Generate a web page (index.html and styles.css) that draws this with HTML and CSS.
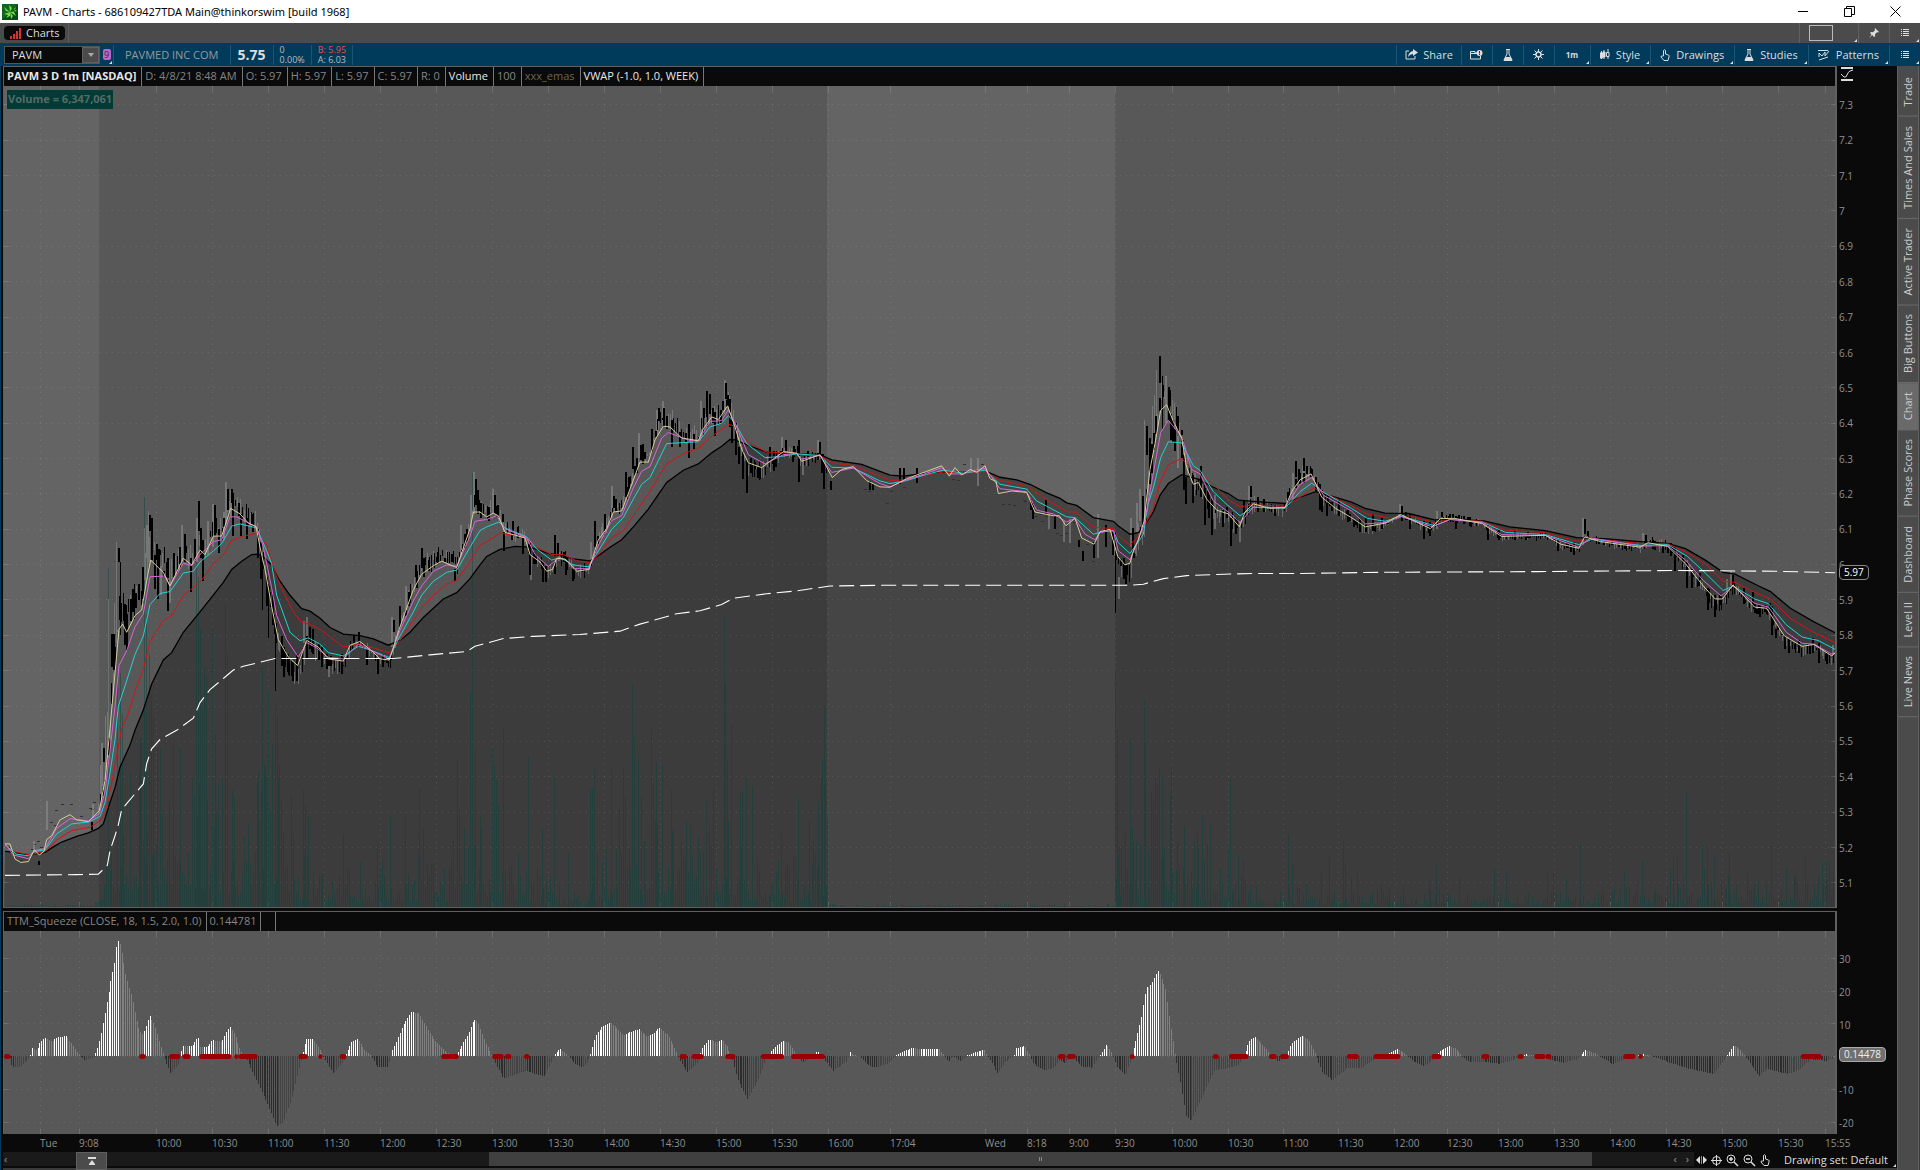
FILE: index.html
```html
<!DOCTYPE html>
<html lang="en">
<head>
    <meta charset="UTF-8">
    <meta name="viewport" content="width=device-width, initial-scale=1.0">
    <title>PAVM - Charts</title>
    <link rel="stylesheet" href="styles.css">
</head>
<body>
    <header class="titlebar">
        <svg class="app-icon" width="16" height="16" viewBox="0 0 16 16">
            <rect width="16" height="16" fill="#14641f"/>
            <path d="M0 16L16 0v16z" fill="#0a4a16"/>
            <path d="M8 8L2 3l2 4zM8 8L7 1l3 3zM8 8l6-5-2 5zM8 8l-6 2 4 1zM8 8l-4 6 4-2zM8 8l1 7 2-3zM8 8l6 4-2-4zM8 8l7-1-3-2z" fill="#6fdc4a"/>
        </svg>
        <h1>PAVM - Charts - 686109427TDA Main@thinkorswim [build 1968]</h1>
        <div class="window-buttons">
            <button aria-label="Minimize"><svg width="11" height="11" viewBox="0 0 11 11"><path d="M0 5.5h10"/></svg></button>
            <button aria-label="Restore"><svg width="11" height="11" viewBox="0 0 11 11"><path d="M.5 2.5h7v8h-7zM2.5 2.5v-2h8v8h-3"/></svg></button>
            <button aria-label="Close"><svg width="11" height="11" viewBox="0 0 11 11"><path d="M.5 .5l10 10M10.5 .5l-10 10"/></svg></button>
        </div>
    </header>

    <nav class="tabbar">
        <div class="tab-cell">
            <a href="#charts" class="tab">
                <svg width="11" height="11" viewBox="0 0 11 11"><path d="M1 11V8M4 11V6M7 11V3M10 11V0" stroke="#d8322c" stroke-width="2"/></svg>
                Charts
            </a>
        </div>
        <div class="tabbar-right">
            <button class="frame-cell corner" aria-label="Layout"><span class="frame"></span></button>
            <button class="small-cell" aria-label="Pin"><svg width="10" height="10" viewBox="0 0 10 10"><path d="M6 0l4 4-1 .5-1-.2-2 2 .2 2L5 9 3.2 7 0 10l2.500-3.500L1 5l1-1 2 .2 2-2-.3-1z" fill="#ddd"/></svg></button>
            <button class="small-cell corner" aria-label="Menu"><svg width="8" height="8" viewBox="0 0 8 8"><path d="M0 .5h1M2 .5h6M0 2.5h1M2 2.5h6M0 4.5h1M2 4.5h6M0 6.5h1M2 6.5h6" stroke="#ddd"/></svg></button>
        </div>
    </nav>

    <div class="toolbar">
        <div class="symbol-box">
            <input type="text" id="symbol" value="PAVM" aria-label="Symbol">
            <button aria-label="Symbol list"><svg width="6" height="4" viewBox="0 0 6 4"><path d="M0 0h6L3 4z" fill="#aaa"/></svg></button>
        </div>
        <button class="link-cell corner" aria-label="Link group"><span class="link-badge">9</span></button>
        <span class="company">PAVMED INC COM</span>
        <strong class="last-price">5.75</strong>
        <span class="two-line"><span>0</span><span>0.00%</span></span>
        <span class="two-line"><span class="bid">B: 5.95</span><span>A: 6.03</span></span>
        <div class="tools">
            <button class="tool"><svg width="13" height="11" viewBox="0 0 13 11"><path d="M4 2H1v8h9V7" fill="none" stroke="#ddd"/><path d="M8 0l5 3.5L8 7V5Q5 5 3 8 3.5 3 8 2z" fill="#ddd"/></svg>Share</button>
            <button class="tool icon-only" aria-label="Snapshot"><svg width="13" height="10" viewBox="0 0 13 10"><path d="M.5 3V1.5H5V3h2M.5 3v6h10V6M.5 3.5H7" fill="none" stroke="#ddd"/><circle cx="9.5" cy="3" r="3" fill="#ddd"/><path d="M9.5 1v2.500M9.5 4v1" stroke="#003b5c"/></svg></button>
            <button class="tool icon-only" aria-label="Lab"><svg width="10" height="12" viewBox="0 0 10 12"><path d="M3 .5h4M4 1v4L1 11h8L6 5V1" fill="none" stroke="#ddd"/><path d="M2.5 8h5l2 4h-9z" fill="#ddd"/></svg></button>
            <button class="tool icon-only" aria-label="Settings"><svg width="11" height="11" viewBox="0 0 11 11"><circle cx="5.5" cy="5.5" r="2.5" fill="none" stroke="#ddd" stroke-width="1.5"/><path d="M5.5 0v3M5.5 8v3M0 5.5h3M8 5.5h3M1.5 1.5l2 2M7.5 7.5l2 2M9.5 1.5l-2 2M3.5 7.5l-2 2" stroke="#ddd"/></svg></button>
            <button class="tool period corner">1m</button>
            <button class="tool corner"><svg width="10" height="11" viewBox="0 0 10 11"><path d="M0 4h2.500v5H0zM3 3h2v5H3zM1.5 2v8M4 1v9" fill="#ddd" stroke="#ddd"/><path d="M6.5 3.5h2.500v4H6.5zM8 0v3M8 8v2" fill="none" stroke="#ddd"/></svg>Style</button>
            <button class="tool corner"><svg width="10" height="12" viewBox="0 0 10 12"><path d="M3.5 7V1.5q1-1.500 2 0V5l3 1q1 .5.5 2L8 11.5H4L1 8q0-1.500 1.500-1z" fill="none" stroke="#ddd"/></svg>Drawings</button>
            <button class="tool corner"><svg width="10" height="12" viewBox="0 0 10 12"><path d="M3 .5h4M4 1v4L1 11h8L6 5V1" fill="none" stroke="#ddd"/><path d="M2.5 8h5l2 4h-9z" fill="#ddd"/></svg>Studies</button>
            <button class="tool corner"><svg width="12" height="12" viewBox="0 0 12 12"><path d="M0 1.5h10M1 8V4l3 3 3-4v4l4-5M1 11l9-3" fill="none" stroke="#ddd"/></svg>Patterns</button>
            <button class="tool icon-only corner" aria-label="Chart menu"><svg width="8" height="8" viewBox="0 0 8 8"><path d="M0 .5h1M2 .5h6M0 2.5h1M2 2.5h6M0 4.5h1M2 4.5h6M0 6.5h1M2 6.5h6" stroke="#ddd"/></svg></button>
        </div>
    </div>

    <main>
        <section class="workspace">
            <div class="panel price-panel">
                <div class="plot-column">
                    <div class="study-row">
                        <span class="bright bold">PAVM 3 D 1m [NASDAQ]</span>
                        <span>D: 4/8/21 8:48 AM</span>
                        <span>O: 5.97</span>
                        <span>H: 5.97</span>
                        <span>L: 5.97</span>
                        <span>C: 5.97</span>
                        <span>R: 0</span>
                        <span class="bright">Volume</span>
                        <span>100</span>
                        <span class="olive">xxx_emas</span>
                        <span class="bright">VWAP (-1.0, 1.0, WEEK)</span>
                    </div>
                    <div class="plot">
                        <svg id="priceChart" viewBox="4 86 1831 821" preserveAspectRatio="none"></svg>
                        <span class="volume-tag">Volume = 6,347,061</span>
                    </div>
                </div>
                <div class="axis price-axis" id="priceAxis">
                    <button class="scale-button" aria-label="Scale"><svg width="12" height="14" viewBox="0 0 12 14"><path d="M0 1h12M0 13h12" stroke="#ddd" stroke-width="2"/><path d="M0 7l3 3q2 1 3-2t3-4l3-1" fill="none" stroke="#ddd"/></svg></button>
                    <span class="price-badge">5.97</span>
                </div>
            </div>

            <div class="panel squeeze-panel">
                <div class="plot-column">
                    <div class="study-row">
                        <span>TTM_Squeeze (CLOSE, 18, 1.5, 2.0, 1.0)</span>
                        <span>0.144781</span>
                        <span class="empty-cell"></span>
                    </div>
                    <div class="plot">
                        <svg id="squeezeChart" viewBox="4 931 1831 203" preserveAspectRatio="none"></svg>
                    </div>
                </div>
                <div class="axis squeeze-axis" id="squeezeAxis">
                    <span class="squeeze-badge">0.14478</span>
                </div>
            </div>

            <div class="time-axis" id="timeAxis"></div>

            <div class="bottom-row">
                <div class="scroll-track">
                    <span class="arrow">‹</span>
                    <button class="jump" aria-label="Collapse"><svg width="8" height="8" viewBox="0 0 8 8"><path d="M0 1h8" stroke="#ddd" stroke-width="2"/><path d="M4 3l3 4H1zM1 7h6v1H1z" fill="#ddd"/></svg></button>
                    <div class="scroll-gap"></div>
                    <div class="thumb"><span></span><span></span></div>
                    <div class="scroll-end"><span>‹</span><span>›</span></div>
                </div>
                <div class="zoom-tools">
                    <button aria-label="Expand"><svg width="11" height="8" viewBox="0 0 11 8"><path d="M4 0v8L0 4zM7 0v8l4-4z" fill="#ddd"/><path d="M5.5 0v8" stroke="#888"/></svg></button>
                    <button aria-label="Crosshair"><svg width="11" height="11" viewBox="0 0 11 11"><circle cx="5.5" cy="5.5" r="4" fill="none" stroke="#ddd"/><path d="M5.5 0v11M0 5.5h11" stroke="#ddd"/></svg></button>
                    <button aria-label="Zoom in"><svg width="13" height="13" viewBox="0 0 13 13"><circle cx="5" cy="5" r="4" fill="none" stroke="#ddd"/><path d="M8 8l4 4M3 5h4M5 3v4" stroke="#ddd" stroke-width="1.5"/></svg></button>
                    <button aria-label="Zoom out"><svg width="13" height="13" viewBox="0 0 13 13"><circle cx="5" cy="5" r="4" fill="none" stroke="#ddd"/><path d="M8 8l4 4M3 5h4" stroke="#ddd" stroke-width="1.5"/></svg></button>
                    <button aria-label="Pan"><svg width="10" height="12" viewBox="0 0 10 12"><path d="M3.5 7V1.5q1-1.500 2 0V5l3 1q1 .5.5 2L8 11.5H4L1 8q0-1.500 1.500-1z" fill="none" stroke="#ddd"/></svg></button>
                </div>
                <button class="drawing-set corner">Drawing set: Default</button>
            </div>
        </section>

        <nav class="side-tabs">
            <a href="#trade">Trade</a>
            <a href="#sales">Times And Sales</a>
            <a href="#active">Active Trader</a>
            <a href="#buttons">Big Buttons</a>
            <a href="#chart" class="active">Chart</a>
            <a href="#phase">Phase Scores</a>
            <a href="#dashboard">Dashboard</a>
            <a href="#level2">Level II</a>
            <a href="#news">Live News</a>
        </nav>
    </main>
    <script src="script.js"></script>
</body>
</html>
```
FILE: styles.css
```css
* {
    box-sizing: border-box;
}
body {
    margin: 0;
    height: 100vh;
    display: flex;
    flex-direction: column;
    overflow: hidden;
    font-family: 'Open Sans', 'Noto Sans', sans-serif;
    font-size: 11px;
    line-height: 14px;
    color: #ddd;
    background-color: #0a0a0a;
}
button {
    font: inherit;
    color: inherit;
    background: none;
    border: none;
    padding: 0;
    display: flex;
    align-items: center;
    justify-content: center;
}
a {
    color: inherit;
    text-decoration: none;
}
.corner {
    position: relative;
}
.corner::after {
    content: "";
    position: absolute;
    right: 1px;
    bottom: 1px;
    border-left: 3px solid transparent;
    border-bottom: 3px solid #ddd;
}

/* window title */
.titlebar {
    height: 23px;
    flex: none;
    display: flex;
    align-items: center;
    background-color: #fff;
    color: #000;
    padding-left: 2px;
    gap: 5px;
}
.titlebar h1 {
    margin: 0;
    font-family: 'Noto Sans', sans-serif;
    font-size: 11px;
    font-weight: normal;
}
.window-buttons {
    display: flex;
    margin-left: auto;
    padding-right: 2px;
}
.window-buttons button {
    width: 46px;
    height: 20px;
}
.window-buttons path {
    fill: none;
    stroke: #000;
}

/* tabs */
.tabbar {
    height: 20px;
    flex: none;
    display: flex;
    justify-content: space-between;
    background-color: #4b4b4b;
}
.tab-cell {
    padding: 3px 3px 3px 4px;
    border-right: 1px solid #5c5c5c;
}
.tab {
    display: flex;
    align-items: center;
    gap: 5px;
    height: 14px;
    padding: 0 6px;
    border-radius: 4px;
    background-color: #0a0a0a;
}
.tabbar-right {
    display: flex;
}
.tabbar-right button {
    border-left: 1px solid #606060;
}
.frame-cell {
    width: 59px;
    justify-content: flex-start;
    padding-left: 9px;
}
.frame {
    width: 24px;
    height: 16px;
    border: 1px solid #bbb;
}
.small-cell {
    width: 31px;
}

/* blue toolbar */
.toolbar {
    height: 23px;
    flex: none;
    display: flex;
    align-items: center;
    background-color: #003b5c;
    padding-left: 4px;
}
.symbol-box {
    display: flex;
    width: 96px;
    height: 18px;
    background-color: #0a0a0a;
    border: 1px solid #555;
}
.symbol-box input {
    flex: 1;
    min-width: 0;
    border: none;
    background: none;
    color: #ddd;
    font: inherit;
    padding: 0 7px;
}
.symbol-box button {
    width: 17px;
    background-color: #4b4b4b;
    border: 1px solid #606060;
}
.link-cell {
    width: 14px;
    height: 20px;
    border-right: 1px solid #1a5577;
}
.link-badge {
    width: 8px;
    height: 11px;
    line-height: 11px;
    font-size: 9px;
    border-radius: 2px;
    background-color: #bb66c8;
    color: #333;
}
.company,
.last-price,
.two-line {
    height: 20px;
    display: flex;
    align-items: center;
    border-right: 1px solid #1a5577;
    padding: 0 6px;
}
.company {
    padding: 0 11px;
    color: #999;
}
.last-price {
    padding: 0 7px;
    font-size: 14px;
}
.two-line {
    flex-direction: column;
    align-items: flex-start;
    font-size: 9px;
    line-height: 10px;
    color: #bbb;
}
.bid {
    color: #e05050;
}
.tools {
    display: flex;
    height: 20px;
    margin-left: auto;
}
.tool {
    gap: 5px;
    padding: 0 8px;
    border-left: 1px solid #1a5577;
}
.tool.corner {
    gap: 6px;
    padding: 0 10px 0 9px;
}
.tool.icon-only {
    width: 31px;
    padding: 0;
}
.tool.period {
    width: 36px;
    font-size: 8px;
    font-weight: bold;
}

/* chart area */
main {
    flex: 1;
    min-height: 0;
    display: flex;
    border-left: 1px solid #003b5c;
    border-right: 1px solid #0b4d72;
}
.workspace {
    flex: 1;
    min-width: 0;
    display: flex;
    flex-direction: column;
    padding-left: 2px;
}
.panel {
    display: flex;
    min-height: 0;
}
.price-panel {
    flex: 842 1 0;
    margin-bottom: 3px;
}
.squeeze-panel {
    flex: 223 1 0;
}
.plot-column {
    flex: 1;
    min-width: 0;
    display: flex;
    flex-direction: column;
    border: 1px solid #606060;
    border-right-width: 2px;
}
.squeeze-panel .plot-column {
    border-bottom: none;
}
.study-row {
    flex: none;
    display: flex;
    height: 19px;
    line-height: 18px;
    color: #858585;
    background-color: #0a0a0a;
    white-space: nowrap;
}
.study-row span {
    padding: 0 4px 0 3px;
    border-right: 1px solid #777;
}
.price-panel .study-row span {
    padding-right: 5px;
}
.study-row .bright {
    color: #e8e8e8;
}
.study-row .bold {
    font-weight: bold;
}
.study-row .olive {
    color: #6b6650;
}
.study-row .empty-cell {
    width: 15px;
}
.plot {
    position: relative;
    flex: 1;
    min-height: 0;
    background-color: #585858;
}
.plot svg {
    display: block;
    width: 100%;
    height: 100%;
}
.volume-tag {
    position: absolute;
    left: 3px;
    top: 4px;
    height: 19px;
    line-height: 18px;
    padding: 0 1px;
    font-weight: bold;
    color: #566a67;
    background-color: #023a35;
}
.axis {
    position: relative;
    width: 60px;
    flex: none;
    display: flex;
    flex-direction: column;
    justify-content: space-between;
    padding-left: 2px;
    font-size: 10px;
    color: #909090;
}
.price-axis {
    padding-top: 32px;
    padding-bottom: 18px;
}
.squeeze-axis {
    padding-top: 41px;
    padding-bottom: 4px;
}
.axis-label {
    height: 14px;
}
.scale-button {
    position: absolute;
    left: 4px;
    top: 1px;
}
.price-badge,
.squeeze-badge {
    position: absolute;
    left: 2px;
    top: 59%;
    padding: 0 4px;
    line-height: 13px;
    border: 1px solid #888;
    border-radius: 4px;
    background-color: #0a0a0a;
    color: #fff;
}
.price-badge {
    margin-top: 2px;
}
.squeeze-badge {
    top: 61%;
    background-color: #707070;
    border-color: #aaa;
    color: #eee;
}
.time-axis {
    flex: none;
    height: 18px;
    line-height: 18px;
    display: grid;
    margin-right: 62px;
    font-size: 10px;
    color: #909090;
    white-space: nowrap;
}

/* scrollbar and drawing tools */
.bottom-row {
    flex: none;
    height: 18px;
    display: flex;
    border-bottom: 2px solid #3a3a3a;
}
.scroll-track {
    flex: 1;
    height: 14px;
    display: flex;
    align-items: center;
    background-color: #1a1a1a;
    color: #999;
}
.arrow {
    width: 73px;
    padding-left: 1px;
}
.jump {
    width: 31px;
    height: 18px;
    align-self: flex-start;
    background-color: #4b4b4b;
    border: 1px solid #606060;
}
.scroll-gap {
    flex: 383;
}
.thumb {
    flex: 1106;
    height: 14px;
    display: flex;
    align-items: center;
    justify-content: center;
    gap: 1px;
    background-color: #404040;
}
.thumb span {
    width: 1px;
    height: 4px;
    background-color: #888;
}
.scroll-end {
    flex: 97;
    display: flex;
    justify-content: flex-end;
    gap: 9px;
    padding-right: 5px;
}
.zoom-tools {
    display: flex;
    align-items: center;
    gap: 4px;
    padding: 0 14px 0 2px;
}
.drawing-set {
    padding-right: 9px;
}

/* right side tabs */
.side-tabs {
    width: 22px;
    flex: none;
    display: flex;
    flex-direction: column;
    padding-top: 2px;
    background-color: #4b4b4b;
    border-left: 1px solid #606060;
    border-right: 1px solid #606060;
}
.side-tabs a {
    writing-mode: vertical-rl;
    transform: rotate(180deg);
    line-height: 20px;
    padding: 9px 0;
    border-top: 1px solid #6a6a6a;
    color: #ccc;
}
.side-tabs .active {
    background-color: #6a6a6a;
}
```
FILE: script.js
```js
const SVG_NS = 'http://www.w3.org/2000/svg';
const priceChart = document.getElementById('priceChart');
const squeezeChart = document.getElementById('squeezeChart');
const BAR = 1.867;

const times = [[40, 'Tue'], [79, '9:08'], [156, '10:00'], [212, '10:30'], [268, '11:00'], [324, '11:30'],
    [380, '12:00'], [436, '12:30'], [492, '13:00'], [548, '13:30'], [604, '14:00'], [660, '14:30'],
    [716, '15:00'], [772, '15:30'], [828, '16:00'], [890, '17:04'], [985, 'Wed'], [1027, '8:18'],
    [1069, '9:00'], [1115, '9:30'], [1172, '10:00'], [1228, '10:30'], [1283, '11:00'], [1338, '11:30'],
    [1394, '12:00'], [1447, '12:30'], [1498, '13:00'], [1554, '13:30'], [1610, '14:00'], [1666, '14:30'],
    [1722, '15:00'], [1778, '15:30'], [1825, '15:55']];

// every series is stored in four blocks, each with its own start and scale
const priceBlocks = [[0, 3], [400, 3], [820, 3], [1300, 2.529]];
const squeezeBlocks = [[0, 2.45], [640, 2.45], [1280, 2.45]];
const priceY = v => 340 + v / 2.703;
const squeezeY = v => 900 + v / 3;

const series = {
    slow: [
        '15,1382 40,1384 80,1392 135,1385 160,1370 185,1357 230,1342 265,1332 295,1320 310,1308 330,1250 345,1210 360,1155 390,1095 405,1055 430,1000 455,930 490,865 515,845 550,790 600,735 635,695 670,655 695,620 725,598 755,580 775,579 795,590 815,608 835,645 870,690 905,726 930,733 960,752 990,777 1030,795 1080,799 1120,808 1165,825 1200,812 1230,790 1270,750 1330,700 1370,683 1410,645 1440,608',
        '260,585 300,566 345,558 390,560 450,578 480,580 520,592 570,597 600,580 630,560 665,540 700,505 745,457 800,385 850,352 895,335 935,305 965,287 990,269 1005,270 1045,285 1100,303 1190,308 1260,310 1295,324 1385,336 1440,355',
        '210,365 250,368 300,362 370,357 430,358 495,354 540,371 590,378 630,390 680,413 720,428 740,440 770,447 820,480 880,490 895,503 930,525 955,521 975,500 1000,465 1020,420 1045,388 1085,364 1135,376 1180,398 1225,415 1255,433 1300,436 1395,442 1440,425',
        '40,410 80,422 130,438 165,455 215,468 275,469 340,486 390,485 465,489 530,505 620,515 700,534 770,537 860,545 930,550 975,564 1025,595 1070,628 1100,633 1160,665 1190,680 1240,725 1300,762 1353,791'],
    red: [
        '15,1370 50,1385 90,1391 135,1383 170,1352 215,1326 270,1317 300,1300 315,1280 330,1220 345,1150 365,1050 385,1010 405,950 430,890 450,815 490,758 515,745 550,690 600,655 640,605 670,580 695,542 730,530 772,522 800,555 830,640 850,680 880,735 905,763 930,768 965,785 1030,830 1075,822 1120,832 1168,846 1200,812 1235,765 1265,725 1300,690 1340,660 1370,650 1410,600 1440,555',
        '260,545 300,522 370,532 410,560 455,580 490,580 530,597 570,602 600,575 635,535 670,515 700,475 745,415 800,335 850,307 895,293 935,260 985,228 1005,233 1045,277 1100,303 1190,306 1205,312 1260,312 1295,332 1360,340 1440,368',
        '210,380 250,378 300,368 370,357 430,360 495,355 540,380 620,394 680,432 740,463 770,466 820,506 880,510 895,530 930,554 955,530 975,500 1000,455 1020,385 1045,338 1085,320 1115,348 1145,362 1180,390 1225,432 1260,451 1300,445 1395,450 1440,425',
        '35,400 75,420 120,443 170,470 225,481 275,475 340,494 380,485 460,490 520,514 620,521 700,544 740,537 860,550 930,551 980,575 1025,605 1070,652 1100,655 1150,682 1190,700 1240,752 1290,785 1353,818'],
    cyan: [
        '15,1365 50,1390 85,1394 105,1382 135,1378 170,1335 215,1308 265,1303 300,1288 315,1250 330,1170 345,1080 355,990 375,935 405,850 430,800 450,715 480,685 510,680 550,630 580,625 600,600 640,570 665,550 695,503 720,497 770,508 800,570 815,605 830,690 850,740 870,790 900,813 925,805 960,822 985,845 1030,854 1075,828 1110,838 1168,858 1200,800 1240,735 1265,690 1300,652 1340,628 1370,622 1410,560 1440,515',
        '260,505 297,492 315,508 380,532 410,565 455,595 480,588 520,608 565,613 595,570 635,512 670,480 700,430 725,390 750,372 800,280 895,275 930,235 965,225 985,204 1005,225 1040,280 1095,318 1140,315 1190,308 1260,312 1295,344 1360,346 1440,381',
        '210,388 260,380 320,363 370,352 430,360 495,352 540,390 620,403 650,435 740,478 765,480 820,525 850,518 880,515 895,548 930,577 955,545 970,525 985,440 1000,400 1022,318 1045,275 1085,278 1120,340 1140,352 1180,410 1215,440 1260,475 1300,452 1395,455 1440,410',
        '30,387 60,412 130,455 170,482 215,490 255,476 340,502 380,485 460,492 520,520 620,526 705,553 740,538 860,555 930,553 980,585 1025,630 1070,677 1095,665 1150,700 1185,713 1230,770 1270,803 1310,812 1353,836'],
    magenta: [
        '15,1362 40,1392 85,1402 105,1380 135,1375 170,1320 210,1294 265,1300 298,1280 315,1220 330,1110 345,990 357,880 380,840 405,775 430,740 450,640 495,638 510,665 550,603 575,610 600,580 640,545 665,540 690,478 710,478 770,506 790,560 815,670 830,745 860,810 895,857 920,818 950,832 985,858 1030,862 1075,822 1110,838 1168,862 1200,785 1240,705 1265,665 1300,625 1340,608 1370,612 1410,530 1425,490',
        '260,485 290,475 315,510 380,535 405,580 445,612 475,590 500,595 525,618 567,618 595,555 635,488 665,475 700,400 725,355 750,342 785,265 805,250 870,272 895,272 930,220 965,218 985,188 1005,225 1045,310 1095,335 1150,310 1190,306 1205,322 1260,312 1295,358 1360,346 1440,388',
        '210,397 260,378 320,360 365,345 385,362 430,362 450,355 495,347 540,402 620,410 650,460 700,470 740,492 765,482 795,525 825,540 840,520 880,515 895,570 930,594 955,540 972,500 1000,360 1022,250 1045,217 1085,262 1115,350 1140,362 1180,435 1225,465 1260,493 1300,452 1395,453 1440,390',
        '30,372 60,420 130,462 165,497 220,493 255,477 335,505 380,485 460,494 510,526 620,528 705,560 735,535 860,557 930,556 975,595 1020,650 1065,692 1095,665 1150,712 1185,722 1230,790 1270,820 1300,822 1345,849 1353,846'],
    tan: [
        '15,1362 30,1362 45,1403 62,1412 85,1410 103,1378 118,1392 132,1382 140,1350 155,1340 180,1297 210,1283 230,1297 265,1302 298,1272 315,1190 330,1050 345,900 357,782 368,768 380,790 405,745 425,730 440,650 452,595 490,628 510,665 550,590 575,608 600,568 615,580 640,530 665,530 692,455 720,470 745,495 768,504 780,560 795,620 815,720 835,810 865,857 893,880 920,812 955,830 985,862 1030,868 1050,825 1080,815 1115,840 1140,862 1168,865 1200,775 1240,675 1265,633 1300,610 1325,598 1370,615 1410,510 1420,465 1440,465',
        '260,478 280,468 295,475 315,520 375,535 390,580 420,600 440,625 458,620 470,590 495,592 530,625 567,620 595,540 620,510 640,465 665,462 685,415 720,330 745,330 765,270 790,233 810,235 845,265 895,272 910,240 935,208 955,215 983,178 1005,235 1025,295 1045,332 1085,345 1115,325 1150,302 1190,306 1205,328 1260,310 1297,372 1325,350 1360,342 1400,380 1440,397',
        '210,398 260,375 320,355 365,340 388,368 405,345 425,365 450,350 470,358 495,340 510,375 528,382 535,415 575,408 620,412 645,465 700,475 718,475 738,502 765,482 785,535 822,552 840,518 870,512 893,585 915,608 930,603 940,570 955,540 972,490 990,350 1005,280 1022,190 1040,175 1060,220 1085,265 1100,345 1120,390 1135,385 1160,430 1190,460 1225,470 1258,505 1275,465 1300,443 1350,455 1395,453 1415,410 1440,378',
        '28,362 55,425 90,455 130,480 165,505 215,495 255,472 330,510 355,483 390,482 460,496 510,531 620,528 660,552 705,563 720,532 760,545 860,560 880,548 930,558 975,605 1020,665 1050,700 1068,700 1095,662 1150,722 1180,725 1225,800 1270,828 1300,823 1345,854 1353,846'],
    vwap: [
        '15,1447 230,1445 295,1444 322,1420 330,1380 345,1340 355,1310 365,1270 380,1253 430,1200 440,1145 455,1105 480,1080 530,1055 580,1022 600,980 630,945 670,915 700,892 730,882 825,861 1180,861 1290,851 1400,842 1425,828',
        '310,807 400,801 540,796 660,787 720,768 830,740 900,732 965,715 1000,698 1100,686 1190,678 1290,665 1440,663',
        '190,663 930,663 970,660 1030,645 1100,637 1180,634 1300,631 1440,631',
        '200,628 600,626 950,623 1200,625 1353,629']
};

// x,high,low and u for an up bar
const candles = [
    '138,1246,1325,u 100,1353,1380,u 113,1408,1418 272,1303,1325 275,1255,1290,u 299,1150,1250,u 304,1088,1205,u 310,1103,1142 316,1015,1160,u 320,1005,1130,u 325,700,1080,u 332,795,883 338,795,893 343,710,870,u 349,547,820,u 355,563,600 361,600,797 371,718,825 377,740,838 390,700,760 397,672,735 405,683,725 427,614,700 433,508,650,u 439,500,590,u 443,462,600,u 448,472,515 454,481,595 461,582,672 472,596,700 480,610,690,u 490,625,640 502,650,733 508,650,710,u 520,577,640 535,565,620,u 544,500,600,u 551,525,600 571,590,682 583,538,600 589,480,600,u 595,436,515 601,508,590 607,540,652 622,490,580,u 635,443,560,u 642,446,530 655,510,577 668,465,540,u 674,385,500,u 681,402,460 690,405,475,u 696,414,530 720,470,530 737,480,538 757,470,520 771,510,590 779,545,645 785,600,730 797,640,720 803,660,805 815,690,770 824,770,950 842,800,880 848,830,912 865,860,905 875,870,922 888,850,921 908,760,820,u 917,750,800,u 926,775,835 935,780,850 955,820,865 963,830,885 978,850,890 983,860,910,u 1022,850,902 1060,797,820 1075,790,825 1097,835,878 1132,860,902 1145,850,885 1172,750,830,u 1180,757,790 1196,720,770 1215,665,730,u 1224,680,720 1245,607,640 1262,563,615 1270,588,640 1283,595,625 1310,573,605 1333,588,600 1363,620,652 1380,500,580,u 1397,512,545 1411,420,520,u 1418,358,470,u 1424,376,440 1430,405,470',
    '241,440,480 263,452,490 275,403,470,u 281,420,470 290,445,480 308,520,570 337,490,530 365,535,578 386,550,635 391,600,650,u 425,600,653 434,610,653 463,528,585 470,550,585 495,590,635 515,620,652 571,545,610,u 583,490,560 613,470,510 632,395,480,u 639,422,455 645,430,465 675,358,425 683,370,410 696,290,350 713,252,320,u 719,283,325 727,280,335 753,241,300 768,190,260,u 773,184,220 785,166,230,u 790,184,235 797,205,240 812,215,290 838,250,290 863,275,320 880,255,295 901,165,240,u 910,185,210 919,137,208 926,145,200 935,183,225 941,195,260 960,190,225 971,108,190,u 976,115,160 982,150,180 988,160,235 992,210,278 1004,235,310 1013,290,335 1025,300,375 1037,330,414 1050,320,360 1062,330,350 1078,340,375 1108,290,330 1120,300,355 1144,262,310,u 1154,270,300 1175,305,330 1193,270,385 1205,320,365,u 1220,300,325 1250,270,305,u 1257,277,310 1264,310,360 1270,330,403 1290,380,405 1407,385,405',
    '147,380,405 155,388,405 237,346,390 249,346,380 288,346,386 450,320,360,u 471,320,395,u 630,430,460 636,440,483 675,432,470 683,470,510,u 703,475,510 730,490,545,u 748,485,548,u 773,540,560 785,570,597 819,545,588 830,470,590,u 856,500,560 877,520,580 886,520,738 895,640,700,u 908,590,645 931,480,560,u 936,508,575 949,440,520,u 958,403,490,u 966,423,500 973,215,480,u 979,232,310 986,265,320 992,280,360 997,178,340,u 1003,148,300,u 1009,80,210,u 1018,42,115 1026,97,240 1035,97,225,u 1044,128,220 1050,200,270 1056,215,275 1062,240,300 1071,260,345,u 1084,265,320 1089,310,405 1095,370,442 1115,365,440 1122,360,405,u 1140,340,425 1153,400,500 1164,420,480 1172,430,528 1181,420,510,u 1205,460,505 1230,480,558 1245,480,525 1256,490,545,u 1268,435,480 1283,395,440,u 1290,395,425 1312,425,465 1330,430,465 1362,445,475 1400,410,450 1417,360,430,u 1424,328,370 1433,350,380',
    '4,340,375,u 8,320,355 14,340,362 26,347,370 38,370,410 48,390,460 54,420,465 66,440,475 95,430,475 120,460,492 150,485,520 165,480,520 182,470,515 205,480,510 250,443,480,u 256,448,490 275,470,510 312,490,538 325,490,530 345,463,510,u 357,465,478 376,470,490 391,475,510 430,487,505 474,500,540 500,510,540 540,515,540 575,515,535 650,540,570 690,545,582 713,482,540,u 718,485,525 725,515,530 866,522,550,u 872,527,550 890,540,565 915,550,575 945,565,625 965,580,600 977,600,670 988,620,670 1008,630,650 1030,670,730 1048,690,750 1060,690,715 1078,645,680,u 1088,625,665,u 1093,635,660 1120,670,710 1143,680,720 1162,715,750 1185,710,740 1192,720,798 1202,780,805 1225,800,835 1235,805,845 1260,810,845 1295,805,825 1310,820,873 1331,840,875 1345,825,852,u'];

const volumeSpikes = [
    '325,615 350,900 360,900 365,1010 390,1170 421,1075 433,424 439,740 448,850 454,960 460,1020 472,1100 518,1080 540,1105 577,1185 589,600 595,640 601,780 607,990 612,880 617,910 635,780 645,1065 655,1200 674,710 680,850 696,1217 701,1235 770,1195 775,1165 785,885 791,1145 797,1180 803,950 815,1095 824,985 830,1015 836,1150 842,1240 874,1230 908,1217 914,1258 925,1290 1030,1335 1132,1365 1171,1290 1216,1280 1256,1213 1268,1320 1372,1135 1378,1270 1411,950 1417,360 1424,1108',
    '241,1290 275,1105 281,1150 287,1190 295,1258 308,1047 385,1125 425,1320 461,1180 505,1380 571,1210 577,1210 583,1155 632,1160 668,1160 674,1230 695,930 701,1070 713,1130 722,1235 752,1050 758,1200 767,1142 785,1148 812,1215 919,1240 928,1315 940,1210 971,742 974,928 980,1138 992,1042 1019,1225 1025,1218 1037,1187 1055,1205 1142,1325 1193,1238 1226,1300 1255,1250 1262,1180 1265,1135 1271,988 1276,1200 1281,1290',
    '886,890 890,1055 896,1370 902,1370 931,1080 935,1320 971,970 974,1085 992,1220 998,1245 1004,1183 1010,1200 1018,1158 1025,1175 1049,1225 1054,1155 1070,1358 1093,1315 1132,1333 1145,1285 1160,1362 1171,1312 1229,1187 1255,1390 1268,1402 1405,1335 1417,1420',
    '52,1440 73,1398 108,1355 113,1413 128,1453 145,1444 224,1480 325,1453 345,1413 401,1453 491,1430 520,1436 624,1437 639,1440 672,1453 709,1364 820,1438 852,1453 864,1408 935,1428 944,1398 954,1392 977,1222 1016,1363 1022,1428 1030,1368 1048,1392 1086,1380 1147,1470 1190,1367 1228,1425 1250,1453 1276,1392 1310,1445 1321,1410 1331,1406 1337,1415 1347,1438'];

// usual height of the volume bars and of the one minute ranges, by x
const volumeLevel = [[4, 3], [98, 4], [100, 60], [115, 110], [150, 130], [175, 90], [200, 130], [225, 110], [250, 70], [275, 130], [290, 70], [320, 40], [370, 38], [420, 60], [440, 30], [470, 110], [500, 60], [580, 10], [600, 60], [650, 100], [700, 80], [730, 90], [770, 45], [810, 60], [826, 90], [828, 3], [1114, 3], [1116, 60], [1150, 80], [1200, 50], [1240, 40], [1270, 12], [1320, 20], [1400, 16], [1500, 12], [1600, 14], [1670, 24], [1834, 28]];
const rangeLevel = [[4, 2], [97, 3], [105, 20], [160, 20], [210, 14], [260, 11], [300, 13], [380, 7], [430, 12], [500, 9], [600, 9], [680, 12], [740, 12], [825, 6], [830, 3], [1000, 3], [1115, 10], [1140, 20], [1200, 11], [1300, 8], [1400, 5], [1600, 4], [1700, 9], [1834, 6]];

const squeeze = [
    '10,468 25,470 32,500 50,500 70,480 76,468 80,442 92,450 100,428 112,412 130,425 138,414 165,408 190,455 198,468 210,482 225,475 232,468 240,450 250,400 262,320 272,250 282,190 289,117 297,135 310,225 325,290 340,380 350,405 357,390 368,347 380,372 395,435 403,468 420,522 440,490 445,462 450,437 458,440 475,435 487,408 493,443 510,440 522,420 545,425 555,400 565,380 578,405 590,450 603,470 630,540 660,620 678,678 695,668 720,580 740,480 748,435 753,417 768,417 785,450 795,470 818,522 845,480 850,460 862,428 878,417 895,450 910,466 925,500 950,502 962,456 990,375 1010,336 1028,340 1060,410 1095,457 1118,470 1127,450 1150,400 1163,357 1172,365 1190,425 1207,466 1220,500 1236,536 1260,525 1290,512 1320,525 1337,528 1355,480 1362,460 1375,447 1390,462 1410,490 1428,503 1442,485 1450,457 1460,410 1475,382 1497,366 1515,388 1528,405 1550,395 1567,387',
    '20,410 35,400 50,383 70,405 85,440 97,475 117,518 145,485 152,450 170,417 190,428 203,420 215,440 228,480 240,535 265,598 295,530 310,475 330,445 350,422 367,427 382,460 400,487 425,470 432,456 440,456 452,475 475,512 508,485 515,456 525,464 540,468 560,495 578,503 610,490 625,470 640,458 670,443 685,447 735,447 750,470 757,485 770,465 785,485 805,466 820,458 845,450 860,480 878,520 895,487 920,464 922,445 945,438 955,462 965,490 990,510 1015,505 1030,480 1042,490 1060,470 1085,500 1110,503 1130,465 1145,432 1158,460 1170,500 1192,525 1205,475 1215,430 1230,350 1242,260 1250,262 1272,210 1290,270 1300,360 1312,460 1325,540 1340,650 1352,665 1375,600 1410,510 1440,505 1468,495 1485,455 1495,422 1508,411 1530,437 1550,470 1567,485',
    '20,465 30,430 57,405 75,425 90,467 105,515 130,542 165,505 200,505 235,475 260,464 290,446 310,462 330,485 355,498 375,480 395,452 415,438 430,445 450,470 465,487 500,485 540,492 575,478 605,463 630,468 660,478 695,488 730,478 750,450 770,458 790,472 817,493 850,475 890,463 915,468 950,485 1000,505 1065,522 1095,470 1113,435 1130,450 1145,475 1175,528 1195,507 1245,522 1275,510 1300,478 1340,482 1356,475'];
const squeezeDots = [
    '10,26 341,357 414,442 447,467 488,567 574,584 584,631 731,754 780,790 832,849 1081,1124 1206,1234 1237,1253 1284,1297',
    '97,115 127,156 209,234 296,353 370,453 1024,1043 1046,1068 1200,1212 1403,1418 1443,1491 1541,1560',
    '0,22 164,193 229,295 371,395 493,513 582,597 623,650 650,665 841,871 878,889 1276,1327'];

function read(text) {
    return text.split(' ').map(item => item.split(',').map(n => n === 'u' ? n : Number(n)));
}

function toPoints(parts, blocks, yOf) {
    return parts.flatMap((part, i) => read(part).map(([x, y]) => [blocks[i][0] + x / blocks[i][1], yOf(y)]));
}

function valueAt(points, x) {
    for (let i = 1; i < points.length; i++) {
        if (x <= points[i][0]) {
            const [x0, y0] = points[i - 1];
            const [x1, y1] = points[i];
            return y0 + (y1 - y0) * Math.max(0, x - x0) / (x1 - x0);
        }
    }
    return points[points.length - 1][1];
}

let seed = 7;
function random() {
    seed = (seed * 16807) % 2147483647;
    return seed / 2147483647;
}

function add(svg, tag, attrs) {
    const el = document.createElementNS(SVG_NS, tag);
    for (const name in attrs) el.setAttribute(name, attrs[name]);
    svg.appendChild(el);
}

function bar(x, top, bottom, width = 1) {
    return `M${Math.round(x)} ${Math.round(top)}h${width}V${Math.round(bottom)}h-${width}z`;
}

function fillPath(svg, d, fill) {
    add(svg, 'path', { d, fill, 'shape-rendering': 'crispEdges' });
}

function line(svg, points, stroke, width, dash) {
    const attrs = { points: points.map(p => p.join(',')).join(' '), fill: 'none', stroke, 'stroke-width': width };
    if (dash) attrs['stroke-dasharray'] = dash;
    add(svg, 'polyline', attrs);
}

function drawGrid(svg, top, bottom, rows) {
    let d = '';
    let ticks = '';
    times.forEach(([x]) => {
        d += `M${x + 0.5} ${top}V${bottom}`;
        ticks += `M${x + 0.5} ${top}v6M${x + 0.5} ${bottom}v-5`;
    });
    rows.forEach(y => {
        d += `M4 ${Math.round(y) + 0.5}H1835`;
        ticks += `M4 ${Math.round(y) + 0.5}h5M1835 ${Math.round(y) + 0.5}h-4`;
    });
    add(svg, 'path', { d, stroke: 'rgba(255,255,255,0.11)', 'stroke-dasharray': '1 5' });
    add(svg, 'path', { d: ticks, stroke: 'rgba(255,255,255,0.12)' });
}

function drawPrice() {
    const lines = {};
    for (const name in series) lines[name] = toPoints(series[name], priceBlocks, priceY);

    // extended hours
    fillPath(priceChart, 'M4 86H99V907H4zM827 86H1115V907H827z', '#646464');
    const area = lines.slow.map(p => p.join(' ')).join('L');
    add(priceChart, 'path', { d: `M4 907L${area}L1835 907z`, fill: 'rgba(0,0,0,0.31)' });

    const rows = [];
    for (let i = 0; i < 23; i++) rows.push(104.3 + i * 35.37);
    drawGrid(priceChart, 86, 907, rows);

    let volume = '';
    for (let x = 5; x < 1834; x += BAR) {
        const level = valueAt(volumeLevel, x);
        volume += bar(x, 907 - level * (0.12 + random() * random() * 1.3), 907);
    }
    toPoints(volumeSpikes, priceBlocks, priceY).forEach(([x, y]) => volume += bar(x, y, 907));
    fillPath(priceChart, volume, 'rgba(0,64,58,0.4)');

    let up = '';
    let down = '';
    let quiet = '';
    for (let x = 5; x < 1834; x += BAR) {
        const early = x < 97 || (x > 830 && x < 1113);
        const y = valueAt(lines.tan, x);
        const pull = (y - valueAt(lines.slow, x)) * 0.15;
        const range = valueAt(rangeLevel, x);
        if (early) {
            if (random() < 0.25) quiet += bar(x, y + pull * 3 + (random() - 0.5) * 22, y, 1).replace(/V.*/, 'h2v1h-3z');
            continue;
        }
        const high = y + pull - random() * range;
        const low = y + pull + random() * range;
        if (random() < 0.5) up += bar(x, high, low);
        else down += bar(x, high, low, random() < 0.3 ? 2 : 1);
    }
    candles.forEach((part, i) => read(part).forEach(([x, high, low, dir]) => {
        const px = priceBlocks[i][0] + x / priceBlocks[i][1];
        const d = bar(px, priceY(high), priceY(low), low - high < 130 ? 2 : 1);
        if (dir) up += d;
        else down += d;
    }));
    fillPath(priceChart, quiet, '#303030');
    fillPath(priceChart, up, 'rgba(150,150,150,0.5)');
    fillPath(priceChart, down, '#000');

    line(priceChart, lines.slow, '#000', 1.3);
    line(priceChart, lines.red, '#d21414', 1);
    line(priceChart, lines.cyan, '#23d2d2', 1);
    line(priceChart, lines.magenta, '#dc64dc', 1);
    line(priceChart, lines.tan, '#d7cd9b', 1);
    line(priceChart, lines.vwap, '#fff', 1.1, '15 6');
}

function drawSqueeze() {
    const points = toPoints(squeeze, squeezeBlocks, squeezeY);
    const colors = { rise: '#fff', fade: '#808080', drop: '#2c2c2c', recover: '#434343' };
    const paths = { rise: '', fade: '', drop: '', recover: '' };
    drawGrid(squeezeChart, 931, 1134, [958, 991, 1023, 1056, 1089, 1122]);
    for (let x = 5; x < 1834; x += BAR) {
        const y = valueAt(points, x);
        const rising = y <= valueAt(points, x - BAR);
        if (y < 1056) paths[rising ? 'rise' : 'fade'] += bar(x - 1, y, 1056);
        else paths[rising ? 'recover' : 'drop'] += bar(x - 1, 1056, Math.max(y, 1057));
    }
    for (const name in paths) fillPath(squeezeChart, paths[name], colors[name]);
    squeezeDots.forEach((part, i) => read(part).forEach(([from, to]) => {
        const [start, scale] = squeezeBlocks[i];
        add(squeezeChart, 'rect', { x: start + from / scale, y: 1054, width: (to - from) / scale, height: 5, rx: 2.5, fill: '#9b0000' });
    }));
}

function addLabels(id, labels) {
    labels.forEach(text => {
        const span = document.createElement('span');
        span.className = 'axis-label';
        span.textContent = text;
        document.getElementById(id).appendChild(span);
    });
}

function drawTimeAxis() {
    const axis = document.getElementById('timeAxis');
    let columns = `${times[0][0] - 3}fr`;
    axis.appendChild(document.createElement('span'));
    times.forEach(([x, text], i) => {
        const next = i + 1 < times.length ? times[i + 1][0] : 1835;
        columns += ` minmax(0, ${next - x}fr)`;
        const span = document.createElement('span');
        span.textContent = text;
        axis.appendChild(span);
    });
    axis.style.gridTemplateColumns = columns;
}

const prices = [];
for (let p = 73; p >= 51; p--) prices.push(String(p / 10));
addLabels('priceAxis', prices);
addLabels('squeezeAxis', ['30', '20', '10', '', '-10', '-20']);
drawTimeAxis();
drawPrice();
drawSqueeze();
```
